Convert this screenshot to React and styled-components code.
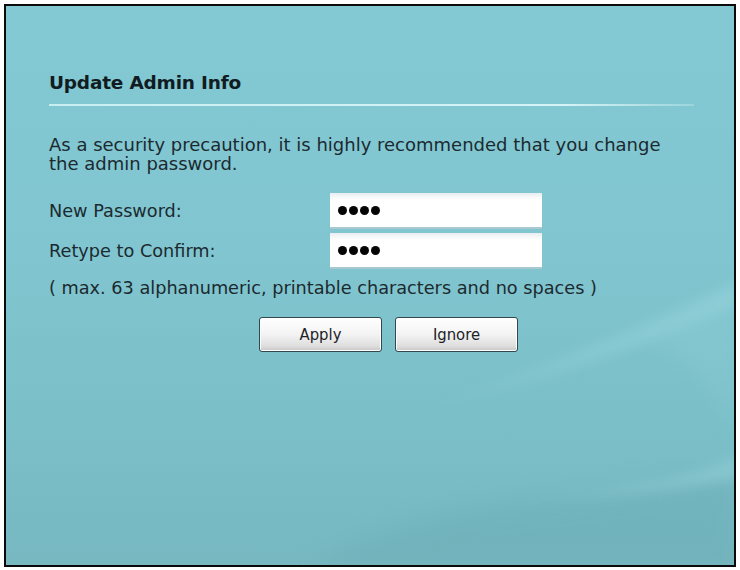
import React from "react";
import styled, { createGlobalStyle } from "styled-components";

const GlobalStyle = createGlobalStyle`
    html, body {
        margin: 0;
        padding: 0;
        background: #ffffff;
    }
`;

const Frame = styled.div`
    position: relative;
    box-sizing: border-box;
    width: 732px;
    height: 563px;
    margin: 4px 0 0 4px;
    border: 2px solid #0a0a0a;
    overflow: hidden;
    background: linear-gradient(180deg, #83c9d3 0%, #80c5cf 45%, #7bbfc8 75%, #77b8c1 100%);
    font-family: "DejaVu Sans", "Liberation Sans", sans-serif;
    color: #1c2a30;
`;

const Swoosh = styled.svg`
    position: absolute;
    left: 0;
    top: 0;
    pointer-events: none;
`;

const Content = styled.div`
    position: relative;
    padding: 66px 0 0 43px;
`;

const Heading = styled.h2`
    margin: 0;
    font-size: 18.5px;
    font-weight: bold;
    color: #111c22;
    line-height: 22px;
    letter-spacing: -0.2px;
`;

const Divider = styled.div`
    width: 645px;
    height: 2px;
    margin-top: 10px;
    background: linear-gradient(90deg, #c9eef2 0%, #d6f3f6 80%, rgba(214, 243, 246, 0.3) 100%);
`;

const Paragraph = styled.p`
    margin: 29px 0 0;
    width: 620px;
    font-size: 18px;
    line-height: 19px;
`;

const FormGrid = styled.div`
    display: grid;
    grid-template-columns: 281px 212px;
    row-gap: 4px;
    margin-top: 20px;
    align-items: center;
`;

const Label = styled.label`
    font-size: 17.7px;
`;

const Field = styled.div`
    box-sizing: border-box;
    height: 36px;
    padding: 0 8px;
    display: flex;
    align-items: center;
    gap: 2px;
    background: linear-gradient(180deg, #e9edef 0%, #ffffff 20%, #ffffff 100%);
    border-bottom: 2px solid #a9c8cf;
`;

const Dot = styled.span`
    width: 9px;
    height: 9px;
    border-radius: 50%;
    background: #050505;
`;

const Hint = styled.div`
    margin-top: 9px;
    font-size: 17.7px;
`;

const ButtonRow = styled.div`
    display: flex;
    gap: 13px;
    margin: 19px 0 0 210px;
`;

const Button = styled.button`
    box-sizing: border-box;
    width: 123px;
    height: 35px;
    border: 1px solid #33474f;
    border-radius: 3px;
    background: linear-gradient(180deg, #ffffff 0%, #f3f3f3 50%, #dedede 85%, #c6c6c6 100%);
    box-shadow: inset 0 0 0 1px #ffffff;
    font-family: "DejaVu Sans Condensed", "DejaVu Sans", sans-serif;
    font-size: 16.5px;
    color: #1c2226;
    padding: 0;
`;

function Password({ length }) {
    return (
        <Field>
            {Array.from({ length }).map((_, i) => (
                <Dot key={i} />
            ))}
        </Field>
    );
}

function Background() {
    return (
        <Swoosh width="732" height="563" viewBox="0 0 732 563">
            <defs>
                <linearGradient id="fadeIn" x1="0" y1="0" x2="1" y2="0">
                    <stop offset="0" stopColor="#a6dee5" stopOpacity="0" />
                    <stop offset="0.5" stopColor="#a6dee5" stopOpacity="0.25" />
                    <stop offset="1" stopColor="#a6dee5" stopOpacity="0.35" />
                </linearGradient>
                <filter id="soft">
                    <feGaussianBlur stdDeviation="6" />
                </filter>
                <filter id="softer">
                    <feGaussianBlur stdDeviation="12" />
                </filter>
            </defs>
            <path
                d="M 300 563 L 732 563 L 732 465 C 640 480, 560 490, 520 495 C 430 505, 360 530, 300 563 Z"
                fill="#5e9fa8"
                opacity="0.25"
                filter="url(#softer)"
            />
            <path
                d="M 420 400 C 520 370, 640 320, 732 275 L 732 300 C 640 340, 520 380, 420 400 Z"
                fill="url(#fadeIn)"
                filter="url(#soft)"
            />
            <path
                d="M 500 495 C 590 485, 680 475, 732 450 L 732 472 C 680 484, 590 492, 500 495 Z"
                fill="url(#fadeIn)"
                filter="url(#soft)"
            />
            <path
                d="M 640 330 C 700 360, 732 400, 732 450 L 732 300 Z"
                fill="#9ad5dd"
                opacity="0.22"
                filter="url(#softer)"
            />
        </Swoosh>
    );
}

export default function App() {
    return (
        <>
            <GlobalStyle />
            <Frame>
                <Background />
                <Content>
                    <Heading>Update Admin Info</Heading>
                    <Divider />
                    <Paragraph>
                        As a security precaution, it is highly recommended that you change the admin password.
                    </Paragraph>
                    <FormGrid>
                        <Label>New Password:</Label>
                        <Password length={4} />
                        <Label>Retype to Confirm:</Label>
                        <Password length={4} />
                    </FormGrid>
                    <Hint>( max. 63 alphanumeric, printable characters and no spaces )</Hint>
                    <ButtonRow>
                        <Button>Apply</Button>
                        <Button>Ignore</Button>
                    </ButtonRow>
                </Content>
            </Frame>
        </>
    );
}
